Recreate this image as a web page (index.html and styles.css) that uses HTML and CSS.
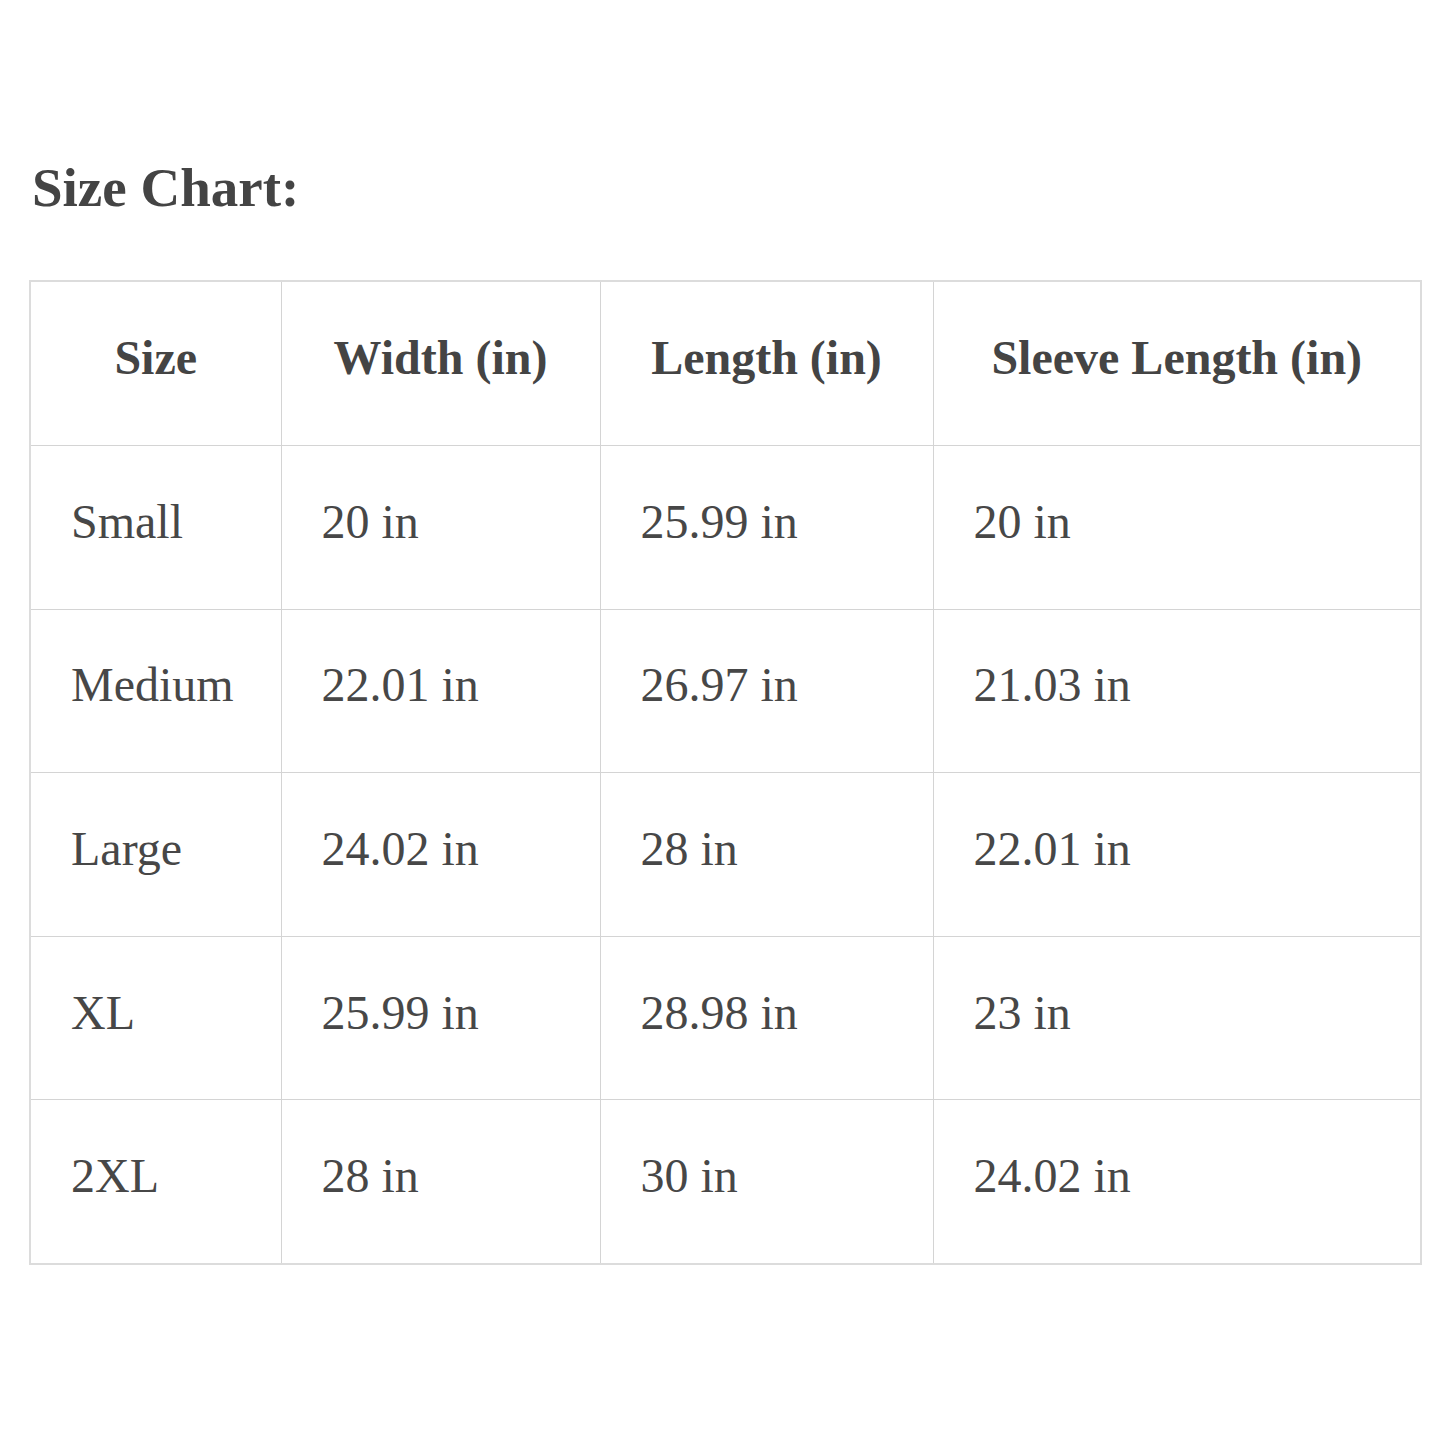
FILE: index.html
```html
<!DOCTYPE html>
<html>
<head>
<meta charset="utf-8">
<link rel="stylesheet" href="styles.css">
</head>
<body>
<div class="page">
  <h2 class="title">Size Chart:</h2>
  <table class="chart">
    <colgroup>
      <col class="c1"><col class="c2"><col class="c3"><col class="c4">
    </colgroup>
    <thead>
      <tr><th>Size</th><th>Width (in)</th><th>Length (in)</th><th>Sleeve Length (in)</th></tr>
    </thead>
    <tbody>
      <tr><td>Small</td><td>20 in</td><td>25.99 in</td><td>20 in</td></tr>
      <tr><td>Medium</td><td>22.01 in</td><td>26.97 in</td><td>21.03 in</td></tr>
      <tr><td>Large</td><td>24.02 in</td><td>28 in</td><td>22.01 in</td></tr>
      <tr><td>XL</td><td>25.99 in</td><td>28.98 in</td><td>23 in</td></tr>
      <tr><td>2XL</td><td>28 in</td><td>30 in</td><td>24.02 in</td></tr>
    </tbody>
  </table>
</div>
</body>
</html>
```
FILE: styles.css
```css
html, body {
  margin: 0;
  padding: 0;
  background: #fff;
}
.page {
  padding: 148px 25px 0 29px;
  font-family: "Liberation Serif", "Times New Roman", serif;
  color: #474747;
}
.title {
  margin: 0 0 52px 3px;
  font-size: 55px;
  font-weight: bold;
  line-height: 80px;
  color: #444;
}
.chart {
  border-collapse: collapse;
  border: 2px solid #dcdcdc;
  width: 1391px;
  table-layout: fixed;
}
.c1 { width: 251px; }
.c2 { width: 319px; }
.c3 { width: 333px; }
.c4 { width: 488px; }
.chart th, .chart td {
  border: 1px solid #d4d4d4;
  height: 150.6px;
  padding: 0 0 12px 40px;
  font-size: 48px;
  vertical-align: middle;
  text-align: left;
}
.chart th {
  text-align: center;
  padding: 0 0 12px 0;
  font-weight: bold;
  height: 151px;
  color: #444;
}
```
